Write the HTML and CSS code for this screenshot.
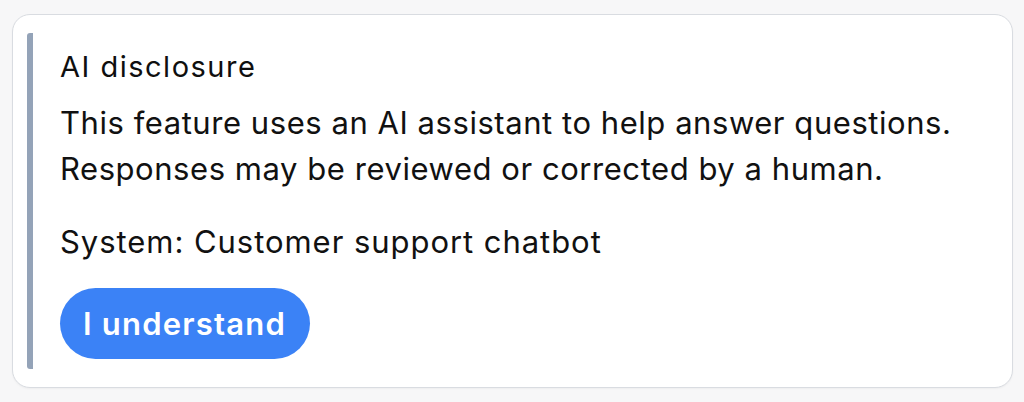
FILE: index.html
```html
<!DOCTYPE html>
<html lang="en">
<head>
<meta charset="utf-8">
<title>AI disclosure</title>
<link rel="stylesheet" href="styles.css">
</head>
<body>
<section class="card">
  <div class="notice">
    <h2 class="title">AI disclosure</h2>
    <p class="text">This feature uses an AI assistant to help answer questions.<br>Responses may be reviewed or corrected by a human.</p>
    <p class="text system">System: Customer support chatbot</p>
    <button class="btn" type="button">I understand</button>
  </div>
</section>
</body>
</html>
```
FILE: styles.css
```css
* { box-sizing: border-box; }
html, body { margin: 0; padding: 0; }
body {
  background: #f7f7f8;
  font-family: Inter, "Noto Sans", sans-serif;
  color: #111111;
  padding: 14px 11px 14px 12px;
}
.card {
  width: 1001px;
  height: 374px;
  background: #ffffff;
  border: 1px solid #d9dce1;
  border-radius: 18px;
  box-shadow: 0 1px 2px rgba(0,0,0,0.04);
  padding: 18px 14px;
}
.notice {
  height: 336px;
  border-left: 6px solid #94a3b8;
  border-radius: 3px;
  padding: 16px 0 0 27px;
  display: flex;
  flex-direction: column;
  align-items: flex-start;
}
.title {
  margin: 0;
  font-size: 29px;
  line-height: 36px;
  font-weight: 400;
  letter-spacing: 1.5px;
  color: #0f0f0f;
}
.text {
  margin: 15px 0 0;
  font-size: 31px;
  line-height: 46px;
  font-weight: 400;
  letter-spacing: 0.55px;
}
.system { margin-top: 27px; letter-spacing: 0.95px; }
.btn {
  margin-top: 23px;
  height: 71px;
  padding: 0 24px 0 23px;
  border: none;
  border-radius: 36px;
  background: #3b82f6;
  color: #ffffff;
  font-family: Inter, "Noto Sans", sans-serif;
  font-size: 31px;
  font-weight: 600;
  letter-spacing: 1.2px;
}
```
